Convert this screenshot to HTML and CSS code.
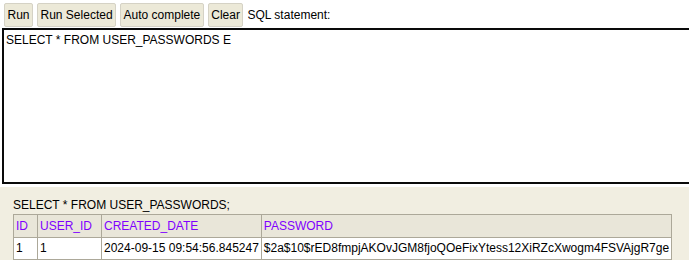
FILE: index.html
```html
<!DOCTYPE html>
<html>
<head>
<meta charset="utf-8">
<link rel="stylesheet" href="styles.css">
</head>
<body>
<div class="toolbar">
  <button class="btn">Run</button>
  <button class="btn">Run Selected</button>
  <button class="btn">Auto complete</button>
  <button class="btn">Clear</button>
  <span class="label">SQL statement:</span>
</div>
<div class="editor">SELECT * FROM USER_PASSWORDS E</div>
<div class="results">
  <div class="stmt">SELECT * FROM USER_PASSWORDS;</div>
  <table class="grid">
    <tr><th>ID</th><th>USER_ID</th><th>CREATED_DATE</th><th>PASSWORD</th></tr>
    <tr><td>1</td><td>1</td><td>2024-09-15 09:54:56.845247</td><td>$2a$10$rED8fmpjAKOvJGM8fjoQOeFixYtess12XiRZcXwogm4FSVAjgR7ge</td></tr>
  </table>
</div>
</body>
</html>
```
FILE: styles.css
```css
html, body {
  margin: 0;
  padding: 0;
  background: #ffffff;
  font-family: "Liberation Sans", Arial, sans-serif;
  font-size: 12px;
  color: #000;
  overflow: hidden;
}
.toolbar {
  display: flex;
  align-items: center;
  gap: 4px;
  padding: 3px 4px 0 4px;
  height: 24px;
}
.btn {
  font-family: "Liberation Sans", Arial, sans-serif;
  font-size: 12px;
  height: 24px;
  padding: 0 2.5px;
  margin: 0;
  background: #ece9d8;
  border: 1px solid #d5d2c5;
  border-radius: 2px;
  color: #000;
}
.editor {
  margin-top: 1px;
  margin-left: 2px;
  width: 700px;
  height: 146px;
  border: 2px solid #0a0a0a;
  border-right: none;
  padding: 3px 2px;
  line-height: 14px;
  background: #fff;
  white-space: pre;
}
.results {
  margin-top: 3px;
  background: #f1eee1;
  padding: 11px 13px 0 13px;
  height: 80px;
}
.stmt {
  line-height: 14px;
  margin-bottom: 2px;
}
.grid {
  border-collapse: collapse;
}
.grid th, .grid td {
  border: 1px solid #aca899;
  text-align: left;
  font-weight: normal;
  white-space: nowrap;
  line-height: 14px;
}
.grid th {
  padding: 4px 9px 4px 2px;
  background: #e9e6d9;
  color: #8000ff;
}
.grid td {
  padding: 3px 2px 4px 2px;
  background: #fff;
}
```
